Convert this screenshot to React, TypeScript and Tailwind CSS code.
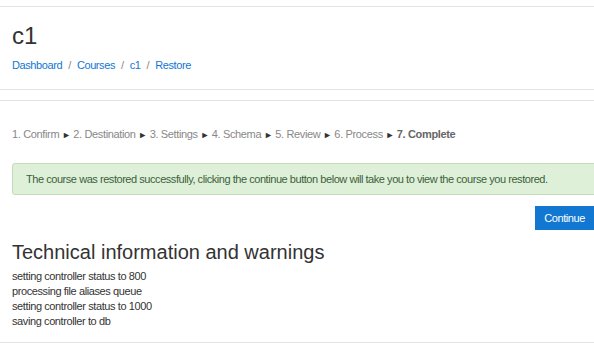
import React from "react";

const STEPS = ["1. Confirm", "2. Destination", "3. Settings", "4. Schema", "5. Review", "6. Process"];

const LOG = [
  "setting controller status to 800",
  "processing file aliases queue",
  "setting controller status to 1000",
  "saving controller to db",
];

const CRUMBS = ["Dashboard", "Courses", "c1", "Restore"];

export default function App() {
  return (
    <div className="min-h-[345px] overflow-hidden bg-white pt-[6px] font-['Liberation_Sans',Arial,sans-serif] text-[#333]">
      <header className="border-y border-[#e3e3e3] pb-[16px] pl-3 pt-[14px]">
        <h1 className="text-[24px] leading-[29px]">c1</h1>
        <nav className="mt-[7px] flex text-[11px] leading-[16px] tracking-[-0.4px] text-[#1177d1]">
          {CRUMBS.map((c, i) => (
            <span key={c} className="flex">
              <span>{c}</span>
              {i < CRUMBS.length - 1 && <span className="px-[6px] text-[#888]">/</span>}
            </span>
          ))}
        </nav>
      </header>

      <main className="mt-[10px] border-y border-[#e3e3e3] pb-[13px] pl-3 pt-[25px]">
        <div className="text-[11px] leading-[16px] tracking-[-0.35px] text-[#888]">
          {STEPS.map((s) => (
            <span key={s}>
              {s} <span className="text-[9px] text-[#333]">►</span>{" "}
            </span>
          ))}
          <span className="font-bold text-[#666]">7. Complete</span>
        </div>

        <div className="mr-[-4px] mt-[20px] whitespace-nowrap rounded-[3px] border border-[#c3dbb9] bg-[#dff0d8] py-[7px] pl-[13px] text-[11px] leading-[16px] tracking-[-0.45px] text-[#3c5f3c]">
          The course was restored successfully, clicking the continue button below will take you to view the course you restored.
        </div>

        <div className="mt-[11px] flex justify-end">
          <button className="h-[24px] bg-[#1177d1] px-[9px] text-[11px] tracking-[-0.4px] text-white">Continue</button>
        </div>

        <h2 className="mt-[10px] text-[20px] leading-[24px] text-[#333]">Technical information and warnings</h2>
        <ul className="mt-[5px] text-[11px] leading-[15px] tracking-[-0.4px] text-[#333]">
          {LOG.map((l) => (
            <li key={l}>{l}</li>
          ))}
        </ul>
      </main>
    </div>
  );
}
